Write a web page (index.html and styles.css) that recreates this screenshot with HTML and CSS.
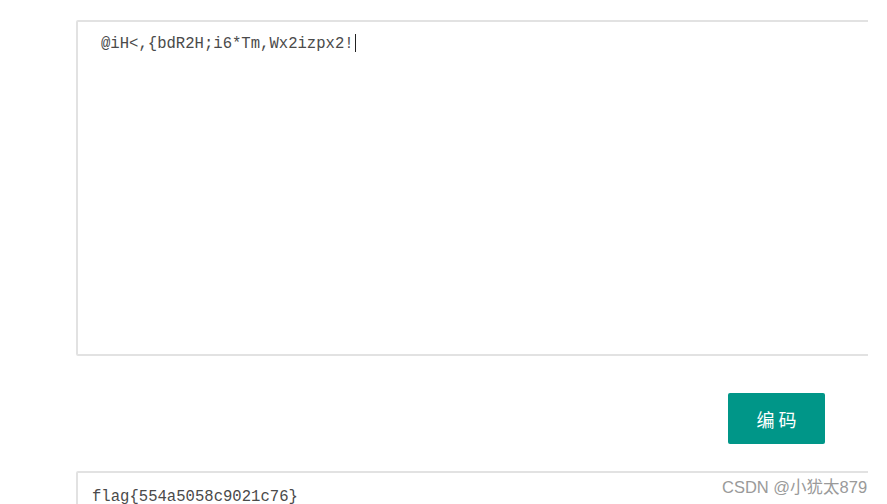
FILE: index.html
```html
<!DOCTYPE html>
<html>
<head>
<meta charset="utf-8">
<link rel="stylesheet" href="styles.css">
</head>
<body>
<div class="page">
  <div class="clip">
    <div class="box input-box"><span class="txt">@iH&lt;,{bdR2H;i6*Tm,Wx2izpx2!</span><span class="caret"></span></div>
  </div>
  <div class="actions">
    <button class="btn">编 码</button>
  </div>
  <div class="clip">
    <div class="box output-box"><span class="txt">flag{554a5058c9021c76}</span></div>
  </div>
</div>
<div class="watermark">CSDN @小犹太879</div>
</body>
</html>
```

FILE: styles.css
```css
html, body {
  margin: 0;
  padding: 0;
  background: #fff;
  width: 887px;
  height: 504px;
  overflow: hidden;
}
.page {
  padding: 20px 0 0 76px;
  height: 484px;
  overflow: hidden;
}
.clip {
  width: 792px;
  overflow: hidden;
}
.box {
  width: 900px;
  box-sizing: border-box;
  border: 2px solid #e2e2e2;
  border-radius: 2px;
  font-family: "Liberation Mono", "Noto Sans CJK SC", monospace;
  font-size: 15.6px;
  color: #4a4a4a;
}
.input-box {
  height: 336px;
  padding: 12px 0 0 23px;
  line-height: 20px;
}
.caret {
  display: inline-block;
  width: 1px;
  height: 18px;
  background: #222;
  vertical-align: -4px;
  margin-left: 1px;
}
.actions {
  width: 749px;
  display: flex;
  justify-content: flex-end;
  margin-top: 37px;
}
.btn {
  width: 97px;
  height: 51px;
  background: #009688;
  color: #fff;
  border: none;
  border-radius: 2px;
  font-family: "Noto Sans CJK SC", sans-serif;
  font-size: 18px;
  padding: 0;
}
.output-box {
  margin-top: 27px;
  height: 60px;
  padding: 12px 0 0 14px;
  line-height: 24px;
}
.watermark {
  position: absolute;
  left: 722px;
  top: 474px;
  font-family: "Liberation Sans", "Noto Sans CJK SC", sans-serif;
  font-size: 16.5px;
  color: #9a9a9a;
  text-shadow: 0 0 2px #fff;
}
```
